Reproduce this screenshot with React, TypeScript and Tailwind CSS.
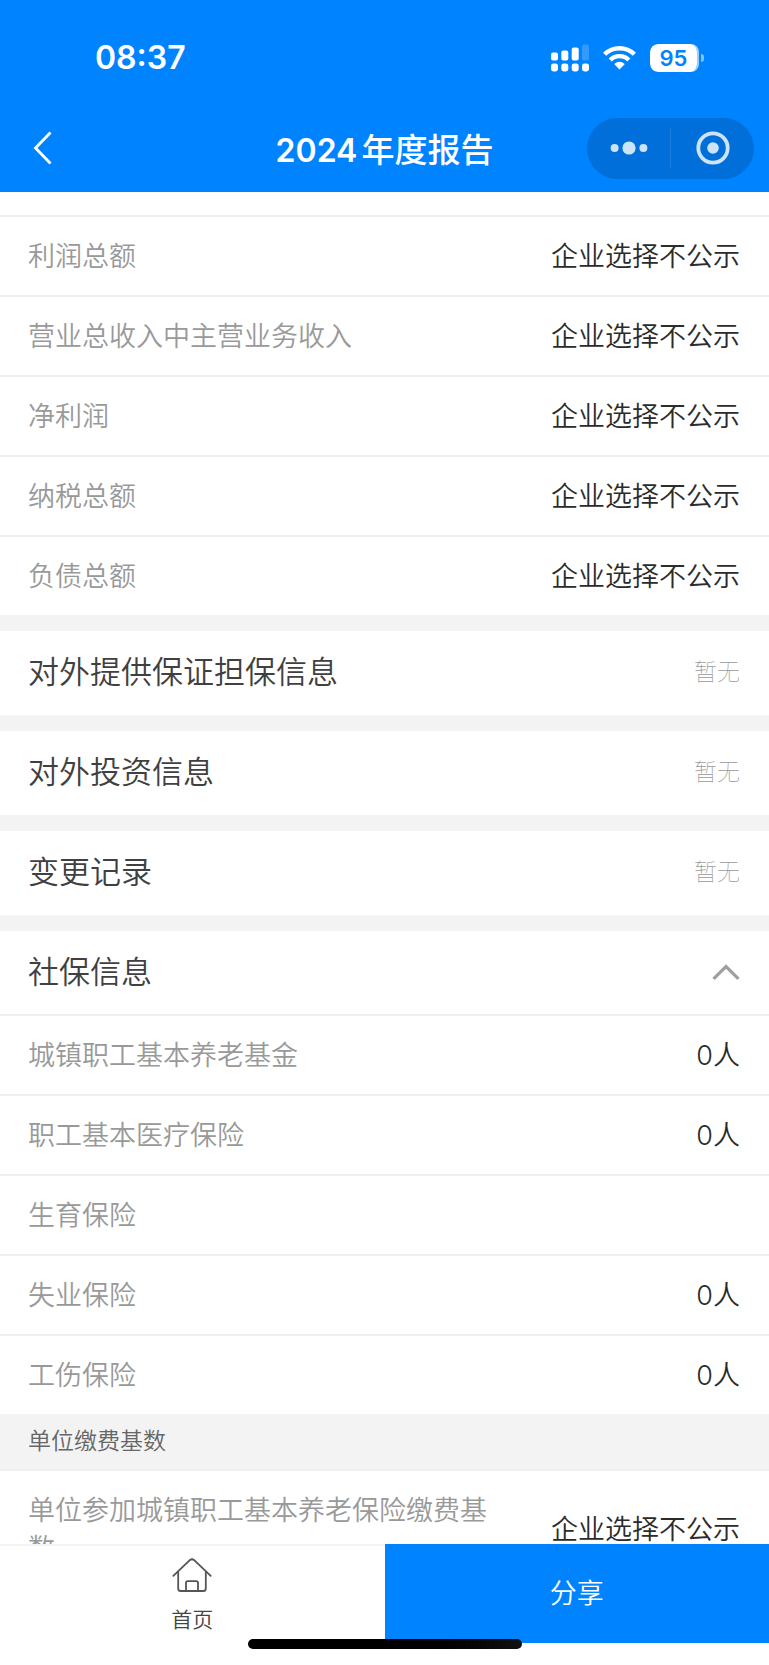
import { useState } from "react";

type Item = { label: string; value: string };

const assetItems: Item[] = [
  { label: "利润总额", value: "企业选择不公示" },
  { label: "营业总收入中主营业务收入", value: "企业选择不公示" },
  { label: "净利润", value: "企业选择不公示" },
  { label: "纳税总额", value: "企业选择不公示" },
  { label: "负债总额", value: "企业选择不公示" },
];

const emptySections = ["对外提供保证担保信息", "对外投资信息", "变更记录"];

const insuranceItems: Item[] = [
  { label: "城镇职工基本养老基金", value: "0人" },
  { label: "职工基本医疗保险", value: "0人" },
  { label: "生育保险", value: "" },
  { label: "失业保险", value: "0人" },
  { label: "工伤保险", value: "0人" },
];

const baseItems: Item[] = [
  {
    label: "单位参加城镇职工基本养老保险缴费基数",
    value: "企业选择不公示",
  },
];

const SignalIcon = () => (
  <svg width="38" height="28" viewBox="0 0 38 28" fill="#fff" aria-hidden="true">
    <rect x="0" y="8.5" width="7" height="8" rx="2" />
    <rect x="10.3" y="6.5" width="7" height="10" rx="2" />
    <rect x="20.7" y="3.5" width="7" height="13" rx="2" />
    <rect x="31" y="0.5" width="7" height="16" rx="2" opacity="0.2" />
    <rect x="0" y="19.5" width="7" height="8" rx="2.4" />
    <rect x="10.3" y="19.5" width="7" height="8" rx="2.4" />
    <rect x="20.7" y="19.5" width="7" height="8" rx="2.4" />
    <rect x="31" y="19.5" width="7" height="8" rx="2.4" />
  </svg>
);

const WifiIcon = () => (
  <svg width="33" height="25" viewBox="0 0 33 25" aria-hidden="true">
    <g fill="none" stroke="#fff" strokeWidth="4.4">
      <path d="M1.6 9.3a21.2 21.2 0 0 1 29.8 0" />
      <path d="M7.2 15a13.2 13.2 0 0 1 18.6 0" />
    </g>
    <path
      d="M16.5 24.4l4.9-4.9a.5.5 0 0 0 0-.8a7.2 7.2 0 0 0-9.8 0a.5.5 0 0 0 0 .8z"
      fill="#fff"
    />
  </svg>
);

const HomeIcon = () => (
  <svg
    width="40"
    height="34"
    viewBox="0 0 40 34"
    fill="none"
    stroke="#555"
    strokeWidth="1.8"
    strokeLinecap="round"
    strokeLinejoin="round"
    aria-hidden="true"
  >
    <path d="M1.3 17.8L17.8 2.2Q20 0.3 22.2 2.2L38.7 17.8" />
    <path d="M6.2 13.8V30.4Q6.2 33 8.8 33H31.2Q33.8 33 33.8 30.4V13.8" />
    <path d="M14 32.6V25Q14 23.2 15.8 23.2H24.2Q26 23.2 26 25V32.6" />
  </svg>
);

const StatusBar = () => (
  <div className="flex h-[115px] items-center justify-between pl-[95px] pr-[65px]">
    <span className="text-[32px] font-semibold leading-10">08:37</span>
    <div className="flex items-center gap-3.5">
      <SignalIcon />
      <WifiIcon />
      <div className="flex items-center gap-0.5">
        <span className="flex h-7 w-[49px] items-center justify-center rounded-lg border-r-2 border-white/60 bg-white bg-clip-padding text-[22px] font-semibold leading-7 text-[#0083ff]">
          95
        </span>
        <span className="h-2 w-[3px] rounded-r-full bg-white/50" />
      </div>
    </div>
  </div>
);

const NavBar = () => (
  <div className="grid h-[66px] grid-cols-[1fr_auto_1fr] items-center pr-[15px]">
    <button type="button" aria-label="返回" className="w-fit pl-[33px]">
      <svg width="20" height="34" viewBox="0 0 20 34" fill="none">
        <path d="M17.5 1.5L2.5 17L17.5 32.5" stroke="#fff" strokeWidth="2.8" />
      </svg>
    </button>
    <h1 className="pl-[15px] pt-1 text-[33px] font-medium leading-10">
      <span className="mr-1 text-[32px] font-semibold">2024</span>年度报告
    </h1>
    <div className="flex h-[61px] w-[167px] items-center justify-self-end rounded-full bg-black/15">
      <button
        type="button"
        aria-label="更多"
        className="flex h-10 flex-1 items-center justify-center border-r border-white/10"
      >
        <svg width="38" height="14" viewBox="0 0 38 14" fill="#cce3f8">
          <circle cx="4.6" cy="7" r="4" />
          <circle cx="19" cy="7" r="6.6" />
          <circle cx="33.4" cy="7" r="4" />
        </svg>
      </button>
      <button
        type="button"
        aria-label="关闭"
        className="flex h-10 flex-1 items-center justify-center"
      >
        <svg width="34" height="34" viewBox="0 0 34 34">
          <circle cx="17" cy="17" r="14.7" fill="none" stroke="#cce3f8" strokeWidth="3.8" />
          <circle cx="17" cy="17" r="5.8" fill="#cce3f8" />
        </svg>
      </button>
    </div>
  </div>
);

const ItemList = ({ items }: { items: Item[] }) => (
  <dl className="text-[27px] leading-[38px]">
    {items.map((item) => (
      <div
        key={item.label}
        className="flex items-center justify-between gap-[60px] border-t-2 border-[#efefef] pb-[19px] pl-7 pr-[29px] pt-[21px]"
      >
        <dt className="text-[#999]">{item.label}</dt>
        <dd className="shrink-0 text-[#2b2b2b]">{item.value}</dd>
      </div>
    ))}
  </dl>
);

const App = () => {
  const [isOpen, setIsOpen] = useState(true);

  return (
    <div className="flex h-screen flex-col overflow-hidden bg-white font-[350] [font-family:Inter,'Noto_Sans_CJK_SC',sans-serif]">
      <header className="shrink-0 bg-[#0083ff] pb-[11px] text-white">
        <StatusBar />
        <NavBar />
      </header>

      <main className="flex min-h-0 flex-1 flex-col gap-4 overflow-y-auto bg-[#f3f3f3] [scrollbar-width:none] *:shrink-0">
        {/* 每行高 80，顶部留白为上一行的剩余部分 */}
        <section className="bg-white pt-[23px]">
          <ItemList items={assetItems} />
        </section>

        {emptySections.map((title) => (
          <section
            key={title}
            className="flex h-21 items-center justify-between bg-white pb-0.5 pl-7 pr-[29px]"
          >
            <h2 className="text-[31px] leading-10 text-[#404040]">{title}</h2>
            <span className="text-[23px] font-thin leading-8 text-[#999]">
              暂无
            </span>
          </section>
        ))}

        {/* 社保信息 */}
        <section className="bg-white">
          <h2 className="text-[31px] leading-10 text-[#404040]">
            <button
              type="button"
              aria-expanded={isOpen}
              onClick={() => setIsOpen((prev) => !prev)}
              className="flex h-[83px] w-full items-center justify-between pb-0.5 pl-7 pr-[29px]"
            >
              社保信息
              <svg
                width="28"
                height="16"
                viewBox="0 0 28 16"
                fill="none"
                className={isOpen ? "" : "rotate-180"}
                aria-hidden="true"
              >
                <path d="M1.5 14.8L14 2.5L26.5 14.8" stroke="#9f9f9f" strokeWidth="3.2" />
              </svg>
            </button>
          </h2>
          {isOpen && (
            <>
              <ItemList items={insuranceItems} />
              <h3 className="bg-[#f3f3f3] px-7 pb-3 pt-[11px] text-[23px] leading-8 text-[#666]">
                单位缴费基数
              </h3>
              <ItemList items={baseItems} />
            </>
          )}
        </section>
      </main>

      <footer className="relative shrink-0 bg-white pb-[22px]">
        <div className="grid h-[99px] grid-cols-2">
          <button
            type="button"
            className="flex flex-col items-center justify-center gap-3 border-t-2 border-[#f3f3f3] pt-1 text-[21px] leading-8 text-[#444]"
          >
            <HomeIcon />
            首页
          </button>
          <button
            type="button"
            className="bg-[#0083ff] text-[27px] leading-[38px] text-white"
          >
            分享
          </button>
        </div>
        {/* 底部横条 */}
        <div className="absolute bottom-4 left-1/2 h-2.5 w-[274px] -translate-x-1/2 rounded-full bg-linear-to-r from-black from-50% to-[#111]" />
      </footer>
    </div>
  );
};

export default App;
